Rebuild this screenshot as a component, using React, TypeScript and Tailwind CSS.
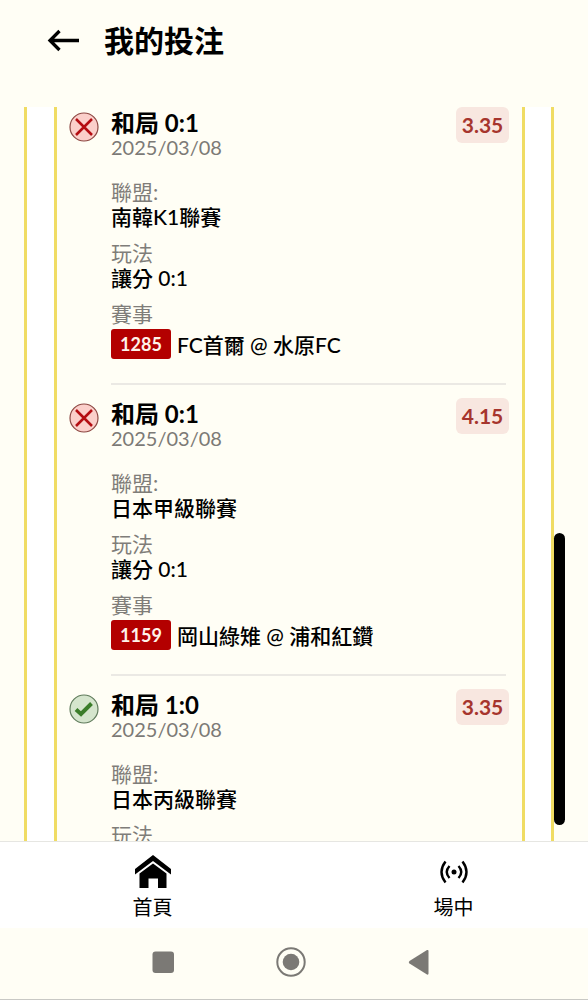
type Bet = {
  pick: string;
  date: string;
  odds: string;
  won: boolean;
  league: string;
  play?: string;
  matchId?: string;
  match?: string;
};

const bets: Bet[] = [
  {
    pick: "和局 0:1",
    date: "2025/03/08",
    odds: "3.35",
    won: false,
    league: "南韓K1聯賽",
    play: "讓分 0:1",
    matchId: "1285",
    match: "FC首爾 @ 水原FC",
  },
  {
    pick: "和局 0:1",
    date: "2025/03/08",
    odds: "4.15",
    won: false,
    league: "日本甲級聯賽",
    play: "讓分 0:1",
    matchId: "1159",
    match: "岡山綠雉 @ 浦和紅鑽",
  },
  {
    pick: "和局 1:0",
    date: "2025/03/08",
    odds: "3.35",
    won: true,
    league: "日本丙級聯賽",
  },
];

export default function App() {
  return (
    <div className="flex h-screen flex-col bg-[#fffef5] font-['Lato','Noto_Sans_CJK_TC',sans-serif] text-black">
      <header className="flex h-[107px] shrink-0 items-start gap-[22px] pt-5 pl-[46px]">
        <button type="button" aria-label="返回" className="grid h-10 w-9 place-items-center">
          <BackArrow />
        </button>
        <h1 className="text-[30px] leading-10 font-bold">我的投注</h1>
      </header>

      <main className="relative min-h-0 flex-1">
        <div className="h-full overflow-hidden pr-[34px] pl-6">
          <div className="min-h-full border-x-3 border-[#f0dc63] bg-white pr-[26px] pl-[27px]">
            <div className="border-x-3 border-[#f0dc63] bg-[#fffef5] pr-[13px] pl-3">
              {bets.map((bet, index) => (
                <BetItem key={index} bet={bet} />
              ))}
            </div>
          </div>
        </div>
        {/* scroll thumb */}
        <div className="absolute top-[58%] right-[23px] h-[292px] w-[11px] rounded-full bg-black" />
      </main>

      <nav className="grid h-[87px] shrink-0 grid-cols-2 gap-8 border-t border-[#e6e6e2] bg-white pl-[18px]">
        <NavItem label="首頁" icon={<HomeIcon />} />
        <NavItem label="場中" icon={<LiveIcon />} />
      </nav>

      <SystemBar />
    </div>
  );
}

function BetItem({ bet }: { bet: Bet }) {
  return (
    <article className="flex items-start gap-3 pb-[13px]">
      <div className="shrink-0 pt-[5px]">{bet.won ? <WonIcon /> : <LostIcon />}</div>
      <div className="min-w-0 flex-1">
        <div className="flex items-start justify-between">
          <div className="pt-[3px]">
            <h2 className="text-2xl leading-[25px] font-bold">{bet.pick}</h2>
            <p className="text-xl leading-[25px] text-[#7c7a76]">{bet.date}</p>
          </div>
          <span className="grid h-9 w-[53px] place-items-center rounded-md bg-[#f8e7e0] text-[21px] leading-9 font-bold text-[#a6352d]">
            {bet.odds}
          </span>
        </div>
        <dl className="mr-[3px] grid gap-[11px] border-b-2 border-[#ebe9e4] pt-[19px] pb-6 text-[21px] leading-[25px]">
          <div>
            <Term>聯盟:</Term>
            <dd className="font-medium">{bet.league}</dd>
          </div>
          <div>
            <Term>玩法</Term>
            <dd className="font-medium">{bet.play}</dd>
          </div>
          {bet.matchId ? (
            <div>
              <Term>賽事</Term>
              <dd className="flex items-center gap-1.5 pt-[3px] font-medium">
                <span className="grid h-[30px] w-[60px] shrink-0 place-items-center rounded-[3px] bg-[#b30000] text-lg font-bold text-[#fff3ea]">
                  {bet.matchId}
                </span>
                {bet.match}
              </dd>
            </div>
          ) : null}
        </dl>
      </div>
    </article>
  );
}

function Term({ children }: { children: React.ReactNode }) {
  return <dt className="text-[#7f7d79]">{children}</dt>;
}

function NavItem({ label, icon }: { label: string; icon: React.ReactNode }) {
  return (
    <a href="#" className="flex flex-col items-center pt-3 text-xl leading-[30px]">
      {icon}
      <span>{label}</span>
    </a>
  );
}

function SystemBar() {
  return (
    <footer className="flex h-[72px] shrink-0 items-center justify-center gap-24 border-b border-[#c9c9c5] pr-1.5 pb-1 text-[#7b7975]">
      <button type="button" aria-label="最近使用">
        <svg width="32" height="32" viewBox="0 0 32 32" fill="currentColor">
          <rect x="5.500" y="5.500" width="21.500" height="21.500" rx="3" />
        </svg>
      </button>
      <button type="button" aria-label="主畫面">
        <svg width="32" height="32" viewBox="0 0 32 32" fill="none">
          <circle cx="16" cy="16" r="13.7" stroke="currentColor" strokeWidth="2" />
          <circle cx="16" cy="16" r="8.3" fill="currentColor" />
        </svg>
      </button>
      <button type="button" aria-label="上一頁">
        <svg width="32" height="32" viewBox="0 0 32 32" fill="currentColor">
          <path d="M24 4Q25.500 3.500 25.500 5V27.500Q25.500 29 24 28.500L6.500 17.500Q5 16 6.500 15Z" />
        </svg>
      </button>
    </footer>
  );
}

function BackArrow() {
  return (
    <svg width="36" height="24" viewBox="0 0 36 24" fill="none" stroke="currentColor" strokeWidth="3.300">
      <path d="M33 12.500H4.500M13.500 3L4 12.500L13.500 22" />
    </svg>
  );
}

function LostIcon() {
  return (
    <svg width="30" height="30" viewBox="0 0 30 30" fill="none">
      <circle cx="15" cy="15" r="14" fill="#fbcfca" stroke="#8d4742" strokeWidth="1.2" />
      <path d="M7 7L23 23M23 7L7 23" stroke="#b50d12" strokeWidth="2.500" />
    </svg>
  );
}

function WonIcon() {
  return (
    <svg width="30" height="30" viewBox="0 0 30 30" fill="none">
      <circle cx="15" cy="15" r="14" fill="#d5e5cd" stroke="#5f7b5b" strokeWidth="1.2" />
      <path d="M7 15.500L12 20L22.500 9.500" stroke="#3b7d2a" strokeWidth="4" />
    </svg>
  );
}

function HomeIcon() {
  return (
    <svg width="38" height="38" viewBox="0 0 38 38" fill="currentColor">
      <path d="M19 1L37 15V20.500L19 7L1 20.500V15Z" />
      <path d="M19 9.500L32.500 19.500V34H24V24.500H14.500V34H5.500V19.500Z" />
    </svg>
  );
}

function LiveIcon() {
  return (
    <svg width="38" height="38" viewBox="0 0 38 38" fill="none" stroke="currentColor" strokeWidth="2.400">
      <circle cx="19" cy="18" r="2.500" fill="currentColor" stroke="none" />
      <path d="M14.500 12Q9 18 14.500 24M23.500 12Q29 18 23.500 24M10.500 7.500Q2.500 18 10.500 28.500M27.500 7.500Q35.500 18 27.500 28.500" />
    </svg>
  );
}
